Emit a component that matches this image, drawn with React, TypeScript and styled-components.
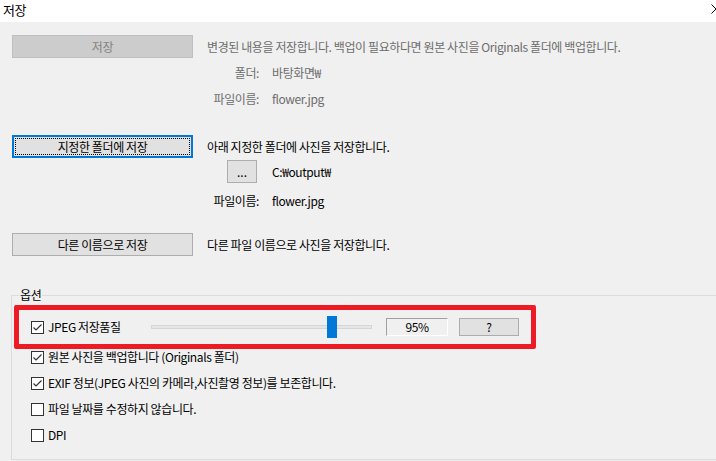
import React from "react";
import styled, { createGlobalStyle, css } from "styled-components";

const GlobalStyle = createGlobalStyle`
  html, body { margin: 0; padding: 0; background: #f0f0f0; }
  body { font-family: "Noto Sans CJK KR", "Noto Sans", sans-serif; }
  * { box-sizing: border-box; }
`;

const Window = styled.div`
  width: 716px;
  height: 461px;
  overflow: hidden;
  display: flex;
  flex-direction: column;
  background: #f0f0f0;
  font-size: 12px;
  line-height: 16px;
  letter-spacing: -0.4px;
  color: #000;
`;

const TitleBar = styled.div`
  height: 22px;
  flex: none;
  background: #fff;
  display: flex;
  justify-content: space-between;
  align-items: flex-start;
  padding-left: 3px;
  font-size: 13px;
  line-height: 20px;
`;

const CloseIcon = styled.svg`
  margin-top: 4px;
  margin-right: -5px;
  flex: none;
`;

const Content = styled.div`
  display: flex;
  flex-direction: column;
  padding: 13px 0 0 12px;
`;

const Section = styled.div<{ $top?: number }>`
  display: flex;
  flex-direction: column;
  margin-top: ${(p) => p.$top ?? 0}px;
`;

const ActionRow = styled.div`
  display: flex;
  align-items: center;
  height: 23px;
  margin-bottom: 2px;
`;

type Variant = "disabled" | "focused" | "normal";

const PushButton = styled.button<{ $variant?: Variant }>`
  width: 181px;
  height: 23px;
  padding: 0;
  font: inherit;
  font-size: 12px;
  letter-spacing: -0.4px;
  color: #000;
  background: #e1e1e1;
  border: 1px solid #adadad;
  ${(p) =>
    p.$variant === "disabled" &&
    css`
      background: #cccccc;
      border-color: #bfbfbf;
      color: #838383;
    `}
  ${(p) =>
    p.$variant === "focused" &&
    css`
      border: 2px solid #0078d7;
      outline: 1px dotted #000;
      outline-offset: -4px;
    `}
`;

const Description = styled.span<{ $muted?: boolean }>`
  margin-left: 14px;
  color: ${(p) => (p.$muted ? "#6d6d6d" : "#000")};
  white-space: nowrap;
`;

const InfoRow = styled.div<{ $height?: number; $after?: number }>`
  display: flex;
  align-items: center;
  height: ${(p) => p.$height ?? 26}px;
  margin-bottom: ${(p) => p.$after ?? 0}px;
`;

const InfoLabel = styled.div<{ $muted?: boolean }>`
  width: 247px;
  display: flex;
  justify-content: flex-end;
  color: ${(p) => (p.$muted ? "#6d6d6d" : "#000")};
  white-space: nowrap;
`;

const InfoValue = styled.div<{ $muted?: boolean }>`
  margin-left: 13px;
  color: ${(p) => (p.$muted ? "#6d6d6d" : "#000")};
  white-space: nowrap;
`;

const BrowseButton = styled.button`
  width: 30px;
  height: 23px;
  margin-right: 2px;
  padding: 0;
  font: inherit;
  font-size: 12px;
  background: #e1e1e1;
  border: 1px solid #adadad;
  color: #000;
`;

const Group = styled.fieldset`
  margin: 27px -10px 1px 11px;
  padding: 0 0 0 2px;
  border: 1px solid #dcdcdc;
  min-width: 0;
  flex: 1;
  display: flex;
  flex-direction: column;
`;

const Legend = styled.legend`
  margin-left: 5px;
  padding: 0 1px;
  font-size: 12px;
  line-height: 20px;
`;

const RedFrame = styled.div`
  width: 522px;
  height: 44px;
  border: 5px solid #ed1c24;
  border-radius: 2px;
  display: flex;
  align-items: center;
  padding-left: 12px;
`;

const CheckRow = styled.label<{ $width?: number }>`
  display: flex;
  align-items: center;
  gap: 4px;
  height: 16px;
  white-space: nowrap;
  ${(p) => p.$width && `width: ${p.$width}px;`}
`;

const Box = styled.span`
  width: 13px;
  height: 13px;
  flex: none;
  border: 1px solid #333;
  background: #fff;
  display: inline-flex;
`;

const Track = styled.div`
  position: relative;
  width: 221px;
  height: 4px;
  background: #e7e7e7;
  border: 1px solid #d6d6d6;
`;

const Thumb = styled.div<{ $left: number }>`
  position: absolute;
  left: ${(p) => p.$left}px;
  top: -10px;
  width: 10px;
  height: 22px;
  background: #0078d7;
`;

const ValueBox = styled.div`
  margin-left: 14px;
  width: 62px;
  height: 18px;
  border-top: 1px solid #a0a0a0;
  border-left: 1px solid #a0a0a0;
  border-right: 1px solid #fff;
  border-bottom: 1px solid #fff;
  display: flex;
  align-items: center;
  justify-content: center;
`;

const HelpButton = styled.button`
  margin-left: 11px;
  width: 60px;
  height: 18px;
  padding: 0;
  font: inherit;
  font-size: 12px;
  line-height: 14px;
  background: #e1e1e1;
  border: 1px solid #adadad;
  color: #000;
`;

const OptionList = styled.div`
  display: flex;
  flex-direction: column;
  gap: 10px;
  padding-left: 17px;
  margin-top: 0px;
`;

function Check({ checked, label, width }: { checked?: boolean; label: string; width?: number }) {
  return (
    <CheckRow $width={width}>
      <Box>
        {checked && (
          <svg width="11" height="11" viewBox="0 0 11 11">
            <polyline points="1.5,5.5 4,8 9.5,2.5" fill="none" stroke="#333" strokeWidth="1.2" />
          </svg>
        )}
      </Box>
      <span>{label}</span>
    </CheckRow>
  );
}

export default function App() {
  return (
    <>
      <GlobalStyle />
      <Window>
        <TitleBar>
          <span>저장</span>
          <CloseIcon width="10" height="10" viewBox="0 0 10 10">
            <path d="M0.5 0.5 L9.5 9.5 M9.5 0.5 L0.5 9.5" stroke="#000" strokeWidth="1" fill="none" />
          </CloseIcon>
        </TitleBar>
        <Content>
          <Section>
            <ActionRow>
              <PushButton $variant="disabled">저장</PushButton>
              <Description $muted>
                변경된 내용을 저장합니다. 백업이 필요하다면 원본 사진을 Originals 폴더에 백업합니다.
              </Description>
            </ActionRow>
            <InfoRow>
              <InfoLabel $muted>폴더:</InfoLabel>
              <InfoValue $muted>바탕화면₩</InfoValue>
            </InfoRow>
            <InfoRow>
              <InfoLabel $muted>파일이름:</InfoLabel>
              <InfoValue $muted>flower.jpg</InfoValue>
            </InfoRow>
          </Section>
          <Section $top={23}>
            <ActionRow>
              <PushButton $variant="focused">지정한 폴더에 저장</PushButton>
              <Description>아래 지정한 폴더에 사진을 저장합니다.</Description>
            </ActionRow>
            <InfoRow $height={23} $after={5}>
              <InfoLabel>
                <BrowseButton>...</BrowseButton>
              </InfoLabel>
              <InfoValue>C:₩output₩</InfoValue>
            </InfoRow>
            <InfoRow>
              <InfoLabel>파일이름:</InfoLabel>
              <InfoValue>flower.jpg</InfoValue>
            </InfoRow>
          </Section>
          <Section $top={19}>
            <ActionRow>
              <PushButton>다른 이름으로 저장</PushButton>
              <Description>다른 파일 이름으로 사진을 저장합니다.</Description>
            </ActionRow>
          </Section>
        </Content>
        <Group>
          <Legend>옵션</Legend>
          <RedFrame>
            <Check checked label="JPEG 저장품질" width={120} />
            <Track>
              <Thumb $left={175} />
            </Track>
            <ValueBox>95%</ValueBox>
            <HelpButton>?</HelpButton>
          </RedFrame>
          <OptionList>
            <Check checked label="원본 사진을 백업합니다 (Originals 폴더)" />
            <Check checked label="EXIF 정보(JPEG 사진의 카메라,사진촬영 정보)를 보존합니다." />
            <Check label="파일 날짜를 수정하지 않습니다." />
            <Check label="DPI" />
          </OptionList>
        </Group>
      </Window>
    </>
  );
}
